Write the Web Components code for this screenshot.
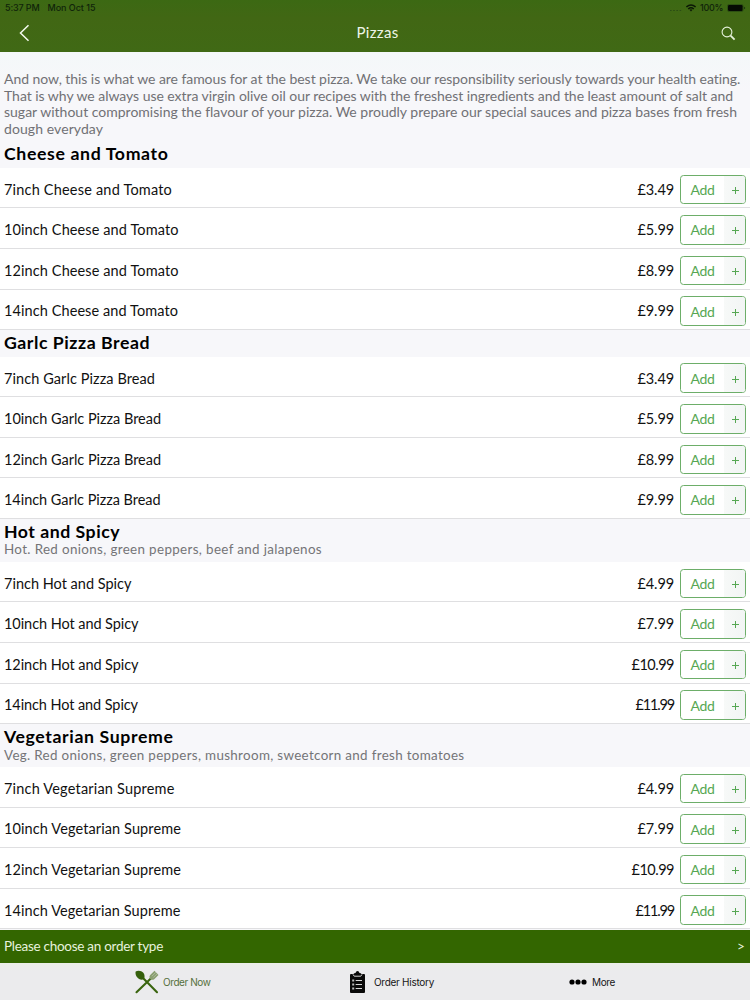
<!DOCTYPE html>
<html lang="en"><head><meta charset="utf-8"><title>Pizzas</title>
<style>html,body{margin:0;height:100%;overflow:hidden;background:#f7f7fa}body{font-family:Lato,"Open Sans",sans-serif}</style></head>
<body><pizza-app></pizza-app>
<script>
const define=(name,html,init)=>customElements.define(name,class extends HTMLElement{
  connectedCallback(){
    if(this.shadowRoot)return;
    const t=document.createElement('template');
    t.innerHTML=typeof html==='function'?html(this):html;
    this.attachShadow({mode:'open'}).append(t.content.cloneNode(true));
    if(init)init(this);
  }
});
// Text run tracked so that it takes exactly the width in its "w" attribute.
define('fit-text',`<style>:host{display:block;white-space:nowrap;width:max-content}span{display:inline-block;white-space:nowrap}</style><span><slot></slot></span>`,el=>{
  const s=el.shadowRoot.querySelector('span'),n=el.textContent.length;
  s.style.letterSpacing=((+el.getAttribute('w')-s.getBoundingClientRect().width)/n)+'px';
});
define('status-bar',`<style>:host{display:flex;align-items:center;height:15px;padding:0 4px 0 5px;font:500 9px/15px Inter,sans-serif;color:#10240a}
.g{flex:1}svg{display:block}</style>
<fit-text w="34.5">5:37 PM</fit-text><fit-text style="margin-left:8px" w="48">Mon Oct 15</fit-text><span class="g"></span>
<svg width="12" height="8" style="margin-right:4px"><path d="M0 6.500h12" stroke="#2b4c14" stroke-width="1" stroke-dasharray="1.6 1.6"/></svg>
<svg width="10" height="8" viewBox="0 0 10 8" style="margin-right:4px" fill="none" stroke="#0b1806" stroke-width="1.5"><path d="M.4 3Q5-1 9.6 3M2.2 5Q5 2.6 7.8 5"/><path d="M3.5 5.8Q5 4.7 6.5 5.8L5 7.6z" fill="#0b1806" stroke="none"/></svg>
<fit-text w="23">100%</fit-text>
<svg width="19" height="8" viewBox="0 0 19 8" style="margin-left:4px"><rect x=".4" y=".4" width="15.8" height="7.2" rx="2" fill="none" stroke="#244312" stroke-width=".7"/><rect x="1" y="1" width="14.6" height="6" rx="1.2" fill="#050a03"/><path d="M17.2 2.7v2.6q1-.5 1-1.3t-1-1.3" fill="#172d0c"/></svg>`);
define('nav-bar',`<style>:host{display:grid;grid-template-columns:1fr auto 1fr;align-items:center;height:36px;color:#eef5e8;font-size:15px}
svg{display:block}.b{margin-left:19px}.s{justify-self:end;margin-right:14px}fit-text{margin:-2px 0 0 5px}</style>
<svg class="b" width="11" height="18" viewBox="0 0 11 18" fill="none" stroke="#f4faef" stroke-width="1.5"><path d="M9.5 1.2 1.5 9l8 7.8"/></svg>
<fit-text w="42">Pizzas</fit-text>
<svg class="s" width="15" height="15" viewBox="0 0 15 15" fill="none" stroke="#e6f2dc"><circle cx="6" cy="6" r="4.9" stroke-width="1.1"/><path d="m9.6 9.6 4 4" stroke-width="1.9"/></svg>`);
define('add-button',`<style>:host{display:flex;box-sizing:border-box;width:66px;height:29.5px;border:1px solid #6dae69;border-radius:3.5px;overflow:hidden;background:#fff;color:#56a753;font-size:14px}
.a{width:43px;display:flex;align-items:center;justify-content:center}.p{flex:1;display:flex;align-items:center;justify-content:center;background:linear-gradient(90deg,#f7f9f8,#f2f5f4)}
svg{display:block;margin:2px 0 0 1px}</style><div class="a"><fit-text w="24">Add</fit-text></div><div class="p"><svg width="7" height="7"><path d="M3.5 0v7M0 3.5h7" stroke="#56a753" stroke-width="1"/></svg></div>`);
define('menu-item',el=>`<style>:host{display:flex;align-items:center;box-sizing:border-box;height:40.575px;padding:3.4px 4px 0;border-bottom:1px solid #dfdfe1;background:#fff;color:#111;font-size:14.5px}
.n{flex:1}.n,.v{margin-top:-.2px}add-button{margin-left:6px}</style><div class="n"><fit-text w="${el.getAttribute('nw')}">${el.getAttribute('name')}</fit-text></div><fit-text class="v" w="${el.getAttribute('pw')}">${el.getAttribute('price')}</fit-text><add-button></add-button>`);
define('menu-section',`<style>:host{display:block}header{box-sizing:border-box;padding:1.6px 4px 0;height:var(--head,26.6px);background:#f7f7fa}
.t{font-size:17.7px;line-height:21px;font-weight:bold;color:#000}.d{font-size:13.4px;line-height:16px;color:#747477;margin-top:-.2px}</style><header><div class="t"><slot name="title"></slot></div><div class="d"><slot name="desc"></slot></div></header><slot></slot>`);
define('menu-intro',`<style>:host{display:block;box-sizing:border-box;height:89.7px;padding:19.8px 4px 0;font-size:14px;line-height:16.4px;color:#717175;background:linear-gradient(#f4f8f9,#f7f7fa 40px)}</style>
<fit-text w="736.5">And now, this is what we are famous for at the best pizza. We take our responsibility seriously towards your health eating.</fit-text>
<fit-text w="729">That is why we always use extra virgin olive oil our recipes with the freshest ingredients and the least amount of salt and</fit-text>
<fit-text w="733">sugar without compromising the flavour of your pizza. We proudly prepare our special sauces and pizza bases from fresh</fit-text>
<fit-text w="99">dough everyday</fit-text>`);
define('order-bar',`<style>:host{display:flex;align-items:center;justify-content:space-between;height:32.5px;padding:0 5px 0 4px;background:#360;color:#e7f2de;font-size:13.5px}svg{display:block}</style>
<fit-text w="159">Please choose an order type</fit-text><fit-text w="8">&gt;</fit-text>`);
define('tab-item',`<style>:host{display:flex;align-items:center;font:10px/14px Inter,sans-serif;color:#161617}.l{margin-left:var(--gap)}</style><slot name="icon"></slot><div class="l"><slot></slot></div>`);
define('tab-bar',`<style>:host{display:grid;grid-template-columns:347px 221px 1fr;box-sizing:border-box;height:37.5px;padding-top:1px;background:linear-gradient(#ebeee8,#ebebed 8px)}svg{display:block}</style>
<tab-item style="--gap:4px;padding-left:135px;color:#55703c"><svg slot="icon" width="24" height="24" viewBox="0 0 24 24"><path d="M7 7 22 22.2M16.3 8 1.5 22.2" stroke="#3a650f" stroke-width="2.1" stroke-linecap="round"/><path d="M.7 1.4C3-.1 7.7.6 9 3.8c1 2.4.5 4.6-.5 5.5C6.600 10.400 3.400 9.400 1.900 7.100.6 5.200.2 2.900.7 1.400z" fill="#35600c"/><path d="m19.500.8-4.300 4.200c-1.100 1.200-.9 3 .1 4s2.700 1.200 3.900.2l4.300-4.300z" fill="#8a9f70"/><path d="m20.900 2.200-4 4M22.300 3.600l-4 4" stroke="#c3cdb7" stroke-width=".6"/></svg><fit-text w="47.5">Order Now</fit-text></tab-item>
<tab-item style="--gap:9px;padding-left:3px"><svg slot="icon" width="15" height="22" viewBox="0 0 15 22"><path d="M1 3h2.500Q4 2 5.500 2 6 0 7.500 0T9.500 2Q11 2 11.500 3H14q1 0 1 1v17q0 1-1 1H1q-1 0-1-1V4q0-1 1-1z" fill="#090909"/><path d="M3 3.400 4.200 5.200h6.600L12 3.400M5.700 9.500H12M5.700 13.500H12M5.700 17.500H12" fill="none" stroke="#d5d5d5"/><path d="M2.200 8.500h2v2h-2zM2.200 12.500h2v2h-2zM2.200 16.500h2v2h-2z" fill="#bbb"/></svg><fit-text w="60">Order History</fit-text></tab-item>
<tab-item style="--gap:5px;padding-left:1px"><svg slot="icon" width="18" height="6"><circle cx="3" cy="3" r="2.6"/><circle cx="9" cy="3" r="2.6"/><circle cx="15" cy="3" r="2.6"/></svg><fit-text w="23">More</fit-text></tab-item>`);
const sections=[
 ['Cheese and Tomato',164.500,'',0,[168,174.500,174.500,174],['3.49','5.99','8.99','9.99']],
 ['Garlc Pizza Bread',146,'',0,[151,157,157,156.500],['3.49','5.99','8.99','9.99']],
 ['Hot and Spicy',116,'Hot. Red onions, green peppers, beef and jalapenos',318,[127.500,134.500,134.500,134],['4.99','7.99','10.99','11.99']],
 ['Vegetarian Supreme',169.500,'Veg. Red onions, green peppers, mushroom, sweetcorn and fresh tomatoes',460.500,[170.500,177,177,176.500],['4.99','7.99','10.99','11.99']]];
const sizes=[7,10,12,14];
define('pizza-app',`<style>:host{display:flex;flex-direction:column;width:750px;height:1000px;overflow:hidden}.top{height:51.6px;flex:none;background:linear-gradient(#3c6913,#416714 18px,#406915)}main{flex:1;min-height:0;overflow:hidden}</style>
<div class="top"><status-bar></status-bar><nav-bar></nav-bar></div><main><menu-intro></menu-intro>${sections.map(([t,tw,d,dw,ws,ps])=>`<menu-section style="--head:${d?42.900:26.600}px"><fit-text slot="title" w="${tw}">${t}</fit-text>${d?`<fit-text slot="desc" w="${dw}">${d}</fit-text>`:''}${sizes.map((z,i)=>`<menu-item name="${z}inch ${t}" nw="${ws[i]}" price="£${ps[i]}" pw="${ps[i]==='10.99'?42.500:ps[i]==='11.99'?38.500:36.500}"></menu-item>`).join('')}</menu-section>`).join('')}</main><order-bar></order-bar><tab-bar></tab-bar>`);
</script></body></html>
